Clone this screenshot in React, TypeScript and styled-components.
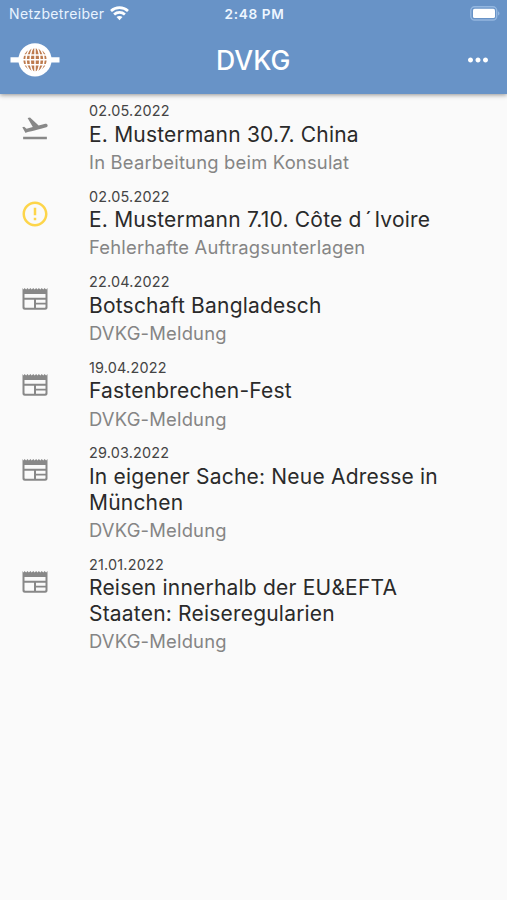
import React from "react";
import styled, { createGlobalStyle } from "styled-components";
import { MdErrorOutline, MdFlightTakeoff, MdMoreHoriz } from "react-icons/md";

const GlobalStyle = createGlobalStyle`
  * { box-sizing: border-box; }
  body {
    margin: 0;
    background: #fafafa;
    font-family: Inter, "Liberation Sans", sans-serif;
  }
`;

const Screen = styled.div`
  display: flex;
  flex-direction: column;
  width: 507px;
  height: 900px;
  overflow: hidden;
  background: #fafafa;
`;

const Header = styled.header`
  flex: none;
  height: 94px;
  background: #6893c7;
  color: #fff;
  box-shadow: 0 1px 4px rgba(0, 0, 0, 0.3), 0 1px 6px rgba(0, 0, 0, 0.14);
`;

const StatusBar = styled.div`
  display: grid;
  grid-template-columns: 1fr auto 1fr;
  align-items: center;
  height: 27px;
  padding: 0 7px 0 9px;
`;

const Carrier = styled.div`
  display: flex;
  align-items: center;
  gap: 6px;
  font-size: 14px;
  letter-spacing: 0.35px;
  color: #e9f3ff;
`;

const Clock = styled.div`
  font-size: 13.6px;
  font-weight: 600;
  letter-spacing: 0.65px;
  color: #eef6ff;
`;

const BatteryIcon = styled.svg`
  justify-self: end;
`;

const AppBar = styled.div`
  display: grid;
  grid-template-columns: 1fr auto 1fr;
  align-items: center;
  height: 66px;
  padding: 0 14.5px 0 10px;
`;

const AppTitle = styled.h1`
  margin: 0;
  padding-left: 4px;
  font-size: 26.6px;
  font-weight: 500;
  line-height: 32px;
  letter-spacing: 0.1px;
`;

const MenuButton = styled.button`
  display: flex;
  justify-self: end;
  padding: 0;
  border: 0;
  background: none;
  color: #fff;
  font-size: 30px;
`;

const List = styled.main`
  display: flex;
  flex-direction: column;
  padding-top: 8px;
`;

const Row = styled.article`
  display: grid;
  grid-template-columns: 69px 1fr;
  padding: 0 60px 12.8px 20px;
`;

const RowIcon = styled.div<{ $warning?: boolean }>`
  padding-top: 11px;
  height: 41px;
  font-size: 30px;
  line-height: 0;
  color: ${(p) => (p.$warning ? "#fdd54a" : "#888")};
`;

const DateText = styled.div`
  font-size: 14.4px;
  line-height: 18px;
  letter-spacing: 0.2px;
  color: #444;
`;

const Title = styled.div`
  margin-top: 1.6px;
  font-size: 21px;
  line-height: 25.7px;
  letter-spacing: 0.2px;
  white-space: pre-line;
  color: #2a2a2a;
`;

const AccentMark = styled.span`
  margin: 0 2.5px 0 3.3px;
`;

const Subtitle = styled.div`
  margin-top: 1.5px;
  font-size: 18.4px;
  line-height: 26px;
  letter-spacing: 0.2px;
  color: #858585;
`;

type Kind = "flight" | "warning" | "news";

function Newspaper() {
  return (
    <svg width="30" height="30" viewBox="0 0 24 24" fill="currentColor">
      <path
        fillRule="evenodd"
        d="M22 3.2 20.9 4.3 19.7 3.2 18.6 4.3 17.4 3.2 16.3 4.3 15.1 3.2 14 4.3 12.9 3.2 11.7 4.3 10.6 3.2 9.4 4.3 8.3 3.2 7.1 4.3 6 3.2 4.9 4.3 3.7 3.2 2.8 4.3 2 3.2V18.7C2 19.8 2.8 20.5 3.8 20.5H20.2C21.2 20.5 22 19.8 22 18.7ZM3.6 8H20.4V11H3.6ZM3.6 12.6H11.2V19H4.2Q3.6 19 3.6 18.4ZM12.8 12.6H20.4V14.9H12.8ZM12.8 16.4H20.4V18.4Q20.4 19 19.8 19H12.8Z"
      />
    </svg>
  );
}

const icons = { flight: MdFlightTakeoff, warning: MdErrorOutline, news: Newspaper };

const entries: { kind: Kind; date: string; title: React.ReactNode; subtitle: string }[] = [
  { kind: "flight", date: "02.05.2022", title: "E. Mustermann 30.7. China", subtitle: "In Bearbeitung beim Konsulat" },
  {
    kind: "warning",
    date: "02.05.2022",
    title: <>E. Mustermann 7.10. Côte d<AccentMark>´</AccentMark>Ivoire</>,
    subtitle: "Fehlerhafte Auftragsunterlagen",
  },
  { kind: "news", date: "22.04.2022", title: "Botschaft Bangladesch", subtitle: "DVKG-Meldung" },
  { kind: "news", date: "19.04.2022", title: "Fastenbrechen-Fest", subtitle: "DVKG-Meldung" },
  { kind: "news", date: "29.03.2022", title: "In eigener Sache: Neue Adresse in\nMünchen", subtitle: "DVKG-Meldung" },
  { kind: "news", date: "21.01.2022", title: "Reisen innerhalb der EU&EFTA\nStaaten: Reiseregularien", subtitle: "DVKG-Meldung" },
];

function Wifi() {
  return (
    <svg width="19" height="15" viewBox="0 0 19 15" fill="none" stroke="#fff" strokeWidth="2.7">
      <path d="M1 4.9C5.8 .5 13.2 .5 18 4.9" />
      <path d="M4.1 8.4C7.2 5.6 11.8 5.6 14.9 8.4" />
      <path d="M9.5 14.2 6.5 11.1C8.2 9.6 10.8 9.6 12.5 11.1Z" fill="#fff" stroke="none" />
    </svg>
  );
}

function Battery() {
  return (
    <BatteryIcon width="30" height="16" viewBox="0 0 30 16">
      <rect x=".8" y=".8" width="25.9" height="13.2" rx="3.8" fill="none" stroke="#94b7e0" strokeWidth="1.4" />
      <rect x="3" y="2.8" width="22" height="9.2" rx="1.6" fill="#fff" />
      <path d="M28 5.2c2 .8 2 3.6 0 4.4Z" fill="#94b7e0" />
    </BatteryIcon>
  );
}

function Logo() {
  return (
    <svg width="50" height="34" viewBox="0 0 50 34">
      <path d="M.5 14.2h49v5.4H.5Z" fill="#fff" />
      <circle cx="25" cy="16.8" r="16.6" fill="#fff" />
      <circle cx="25" cy="16.8" r="11.6" fill="#bd7b4e" />
      <g fill="none" stroke="#fff" strokeWidth="1.5">
        <path d="M25 4v26M12 16.8h26M14 11.9h22M14 21.7h22" />
        <ellipse cx="25" cy="16.8" rx="4.8" ry="13" />
        <ellipse cx="25" cy="16.8" rx="9" ry="13" />
      </g>
    </svg>
  );
}

export default function App() {
  return (
    <>
      <GlobalStyle />
      <Screen>
        <Header>
          <StatusBar>
            <Carrier>
              Netzbetreiber
              <Wifi />
            </Carrier>
            <Clock>2:48 PM</Clock>
            <Battery />
          </StatusBar>
          <AppBar>
            <Logo />
            <AppTitle>DVKG</AppTitle>
            <MenuButton aria-label="Menü">
              <MdMoreHoriz />
            </MenuButton>
          </AppBar>
        </Header>
        <List>
          {entries.map((entry, i) => {
            const Icon = icons[entry.kind];
            return (
              <Row key={i}>
                <RowIcon $warning={entry.kind === "warning"}>
                  <Icon />
                </RowIcon>
                <div>
                  <DateText>{entry.date}</DateText>
                  <Title>{entry.title}</Title>
                  <Subtitle>{entry.subtitle}</Subtitle>
                </div>
              </Row>
            );
          })}
        </List>
      </Screen>
    </>
  );
}
